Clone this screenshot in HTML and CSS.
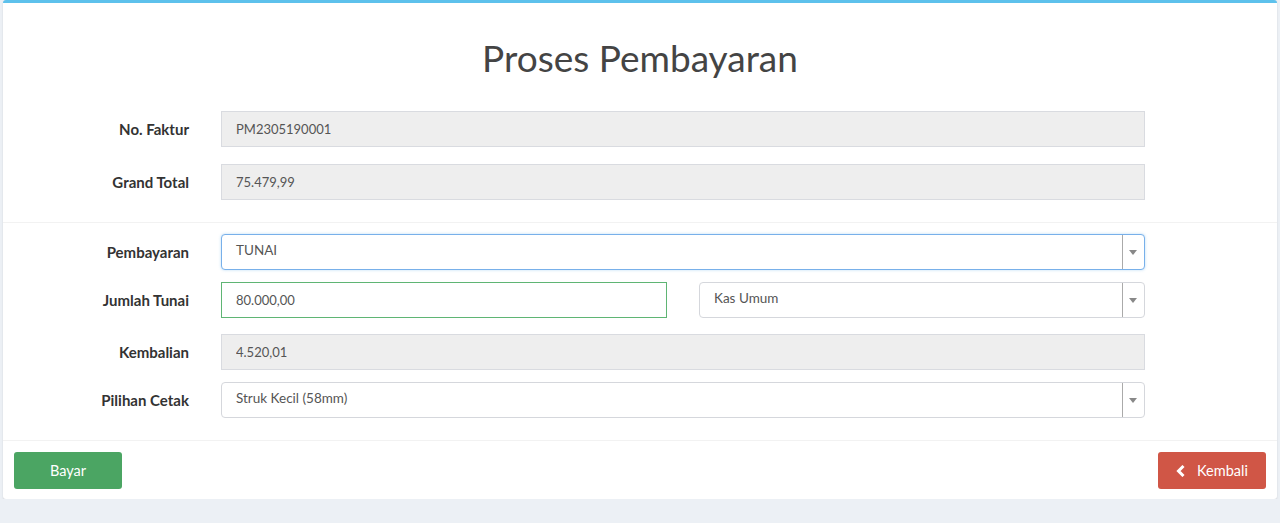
FILE: index.html
```html
<!DOCTYPE html>
<html lang="id">
<head>
  <meta charset="UTF-8">
  <meta name="viewport" content="width=device-width, initial-scale=1.0">
  <title>Proses Pembayaran</title>
  <link rel="stylesheet" href="styles.css">
</head>
<body>
  <div class="box">
    <div class="box-header">
      <h1>Proses Pembayaran</h1>
    </div>

    <div class="box-body">
      <div class="form-row">
        <label>No. Faktur</label>
        <input class="form-control" type="text" value="PM2305190001" readonly>
      </div>
      <div class="form-row">
        <label>Grand Total</label>
        <input class="form-control" type="text" value="75.479,99" readonly>
      </div>
    </div>

    <div class="box-body bordered">
      <div class="form-row row-bayar">
        <label>Pembayaran</label>
        <div class="select2 focus">
          <span class="select2-text">TUNAI</span>
          <span class="select2-arrow"></span>
        </div>
      </div>
      <div class="form-row row-tunai">
        <label>Jumlah Tunai</label>
        <div class="split">
          <input class="form-control success" type="text" value="80.000,00">
          <div class="select2">
            <span class="select2-text">Kas Umum</span>
            <span class="select2-arrow"></span>
          </div>
        </div>
      </div>
      <div class="form-row row-kembali">
        <label>Kembalian</label>
        <input class="form-control" type="text" value="4.520,01" readonly>
      </div>
      <div class="form-row">
        <label>Pilihan Cetak</label>
        <div class="select2">
          <span class="select2-text">Struk Kecil (58mm)</span>
          <span class="select2-arrow"></span>
        </div>
      </div>
    </div>

    <div class="box-footer">
      <button class="btn btn-success">Bayar</button>
      <button class="btn btn-danger">
        <svg class="icon" width="10" height="12" viewBox="0 0 10 12">
          <path d="M7.5 1 L2.5 6 L7.5 11" fill="none" stroke="#fff" stroke-width="3" stroke-linejoin="miter"/>
        </svg>
        Kembali
      </button>
    </div>
  </div>
</body>
</html>
```

FILE: styles.css
```css
body {
  margin: 0;
  font-family: Lato, "Open Sans", Arial, sans-serif;
  font-size: 14px;
  background-color: #ecf0f5;
  color: #333;
}
.box {
  margin: 0 3px;
  background: #fff;
  border-top: 3px solid #5dc1ec;
  border-radius: 3px;
  box-shadow: 0 1px 2px rgba(0, 0, 0, 0.12);
}
.box-header {
  padding: 30px 0 0;
  height: 78px;
  box-sizing: border-box;
  text-align: center;
}
.box-header h1 {
  margin: 0;
  font-size: 37px;
  font-weight: 400;
  line-height: 50px;
  color: #444;
}
.box-body {
  padding: 30px 132px 22px 15px;
}
.box-body.bordered {
  border-top: 1px solid #f2f2f2;
  padding-top: 11px;
  padding-bottom: 22px;
}
.form-row {
  display: grid;
  grid-template-columns: 171px 1fr;
  column-gap: 32px;
  align-items: center;
  margin-bottom: 17px;
}
.form-row:last-child {
  margin-bottom: 0;
}
.row-bayar {
  margin-bottom: 12px;
}
.row-tunai {
  margin-bottom: 16px;
}
.row-kembali {
  margin-bottom: 12px;
}
.form-row label {
  text-align: right;
  font-size: 15px;
  font-weight: 700;
  color: #333;
}
.form-control {
  box-sizing: border-box;
  width: 100%;
  height: 36px;
  padding: 0 14px;
  border: 1px solid #d9dbe0;
  border-radius: 0;
  font-family: inherit;
  font-size: 13px;
  color: #555;
  background: #fff;
  outline: none;
}
.form-control[readonly] {
  background: #eee;
}
.form-control.success {
  border-color: #5fb574;
}
.split {
  display: grid;
  grid-template-columns: 1fr 1fr;
  column-gap: 32px;
}
.select2 {
  box-sizing: border-box;
  height: 36px;
  border: 1px solid #d5d7dc;
  border-radius: 4px;
  display: flex;
  background: #fff;
}
.select2.focus {
  border-color: #78b0ea;
  box-shadow: 0 0 3px rgba(102, 175, 233, 0.45);
}
.select2-text {
  flex: 1;
  padding: 5px 14px 0;
  font-size: 13.5px;
  line-height: 20px;
  color: #555;
}
.select2-arrow {
  width: 21px;
  border-left: 1px solid #aaa;
  position: relative;
}
.select2-arrow::after {
  content: "";
  position: absolute;
  left: 6px;
  top: 15px;
  border-left: 4px solid transparent;
  border-right: 4px solid transparent;
  border-top: 5px solid #888;
}
.box-footer {
  border-top: 1px solid #f2f2f2;
  padding: 11px 11px 10px 11px;
  display: flex;
  justify-content: space-between;
}
.btn {
  width: 108px;
  height: 37px;
  border: none;
  border-radius: 3px;
  color: #fff;
  font-family: inherit;
  font-size: 14.5px;
  cursor: pointer;
  display: flex;
  align-items: center;
  justify-content: center;
  gap: 11px;
}
.btn-success {
  background: #4ba563;
}
.btn-danger {
  background: #d05646;
}
```
